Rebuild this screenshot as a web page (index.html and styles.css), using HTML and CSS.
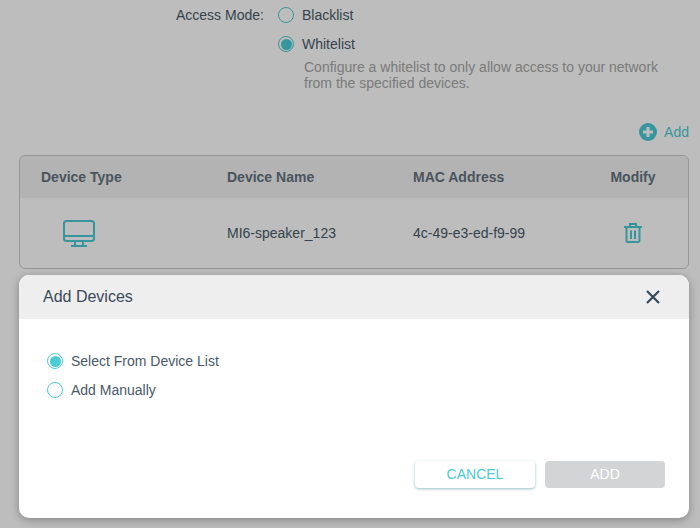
FILE: index.html
```html
<!DOCTYPE html>
<html lang="en">
<head>
<meta charset="utf-8">
<title>Access Control</title>
<link rel="stylesheet" href="styles.css">
</head>
<body>
<main class="page">
  <section class="mode">
    <div class="mode-label">Access Mode:</div>
    <div class="mode-options">
      <label class="radio-row"><span class="radio"></span><span>Blacklist</span></label>
      <label class="radio-row"><span class="radio on"></span><span>Whitelist</span></label>
      <p class="hint">Configure a whitelist to only allow access to your network<br>from the specified devices.</p>
    </div>
  </section>
  <div class="toolbar">
    <svg class="add-icon" viewBox="0 0 18 18" width="18" height="18"><circle cx="9" cy="9" r="9" fill="#4acbd6"/><path d="M9 4v10M4 9h10" stroke="#fff" stroke-width="3"/></svg>
    <span>Add</span>
  </div>
  <div class="table">
    <div class="thead">
      <div>Device Type</div><div>Device Name</div><div>MAC Address</div><div class="c">Modify</div>
    </div>
    <div class="tbody">
      <div class="icon-cell">
        <svg viewBox="0 0 32 27" width="32" height="27" fill="none" stroke="#4acbd6" stroke-width="2"><rect x="1" y="1" width="30" height="20" rx="2.5"/><path d="M1 16h30M12 21v5M20 21v5M8 26h16"/></svg>
      </div>
      <div>MI6-speaker_123</div>
      <div>4c-49-e3-ed-f9-99</div>
      <div class="c">
        <svg viewBox="0 0 18 20" width="18" height="20" fill="none" stroke="#4acbd6" stroke-width="2"><path d="M0 4h18M6 4V1h6v3"/><path d="M2.5 4v13.5a1.5 1.5 0 0 0 1.5 1.5h10a1.5 1.5 0 0 0 1.5-1.5V4M7 7.5V16M11 7.5V16"/></svg>
      </div>
    </div>
  </div>
</main>
<div class="scrim"></div>
<div class="modal">
  <header class="modal-head">
    <h2>Add Devices</h2>
    <svg viewBox="0 0 14 14" width="14" height="14" stroke="#34495a" stroke-width="2.2" fill="none"><path d="M1 1l12 12M13 1L1 13"/></svg>
  </header>
  <div class="modal-body">
    <label class="radio-row"><span class="radio on"></span><span>Select From Device List</span></label>
    <label class="radio-row"><span class="radio"></span><span>Add Manually</span></label>
  </div>
  <footer class="modal-foot">
    <button class="btn cancel">CANCEL</button>
    <button class="btn add">ADD</button>
  </footer>
</div>
</body>
</html>
```
FILE: styles.css
```css
* { box-sizing: border-box; }
html, body { margin: 0; height: 100%; }
body { width: 700px; height: 528px; overflow: hidden; position: relative; background: #fff; font-family: "Liberation Sans", Arial, sans-serif; font-size: 14px; color: #4a5a68; }
.page { padding: 0 11px 0 19px; }
.mode { display: flex; padding-left: 157px; padding-top: 7px; }
.mode-label { width: 102px; line-height: 16px; color: #4a5a68; }
.mode-options { display: flex; flex-direction: column; }
.radio-row { display: flex; align-items: center; gap: 8px; height: 16px; line-height: 16px; margin-bottom: 13px; }
.radio { width: 16px; height: 16px; border-radius: 50%; border: 1.5px solid #4acbd6; background: #fff; flex: none; position: relative; }
.radio.on::after { content: ""; position: absolute; inset: 1.5px; border-radius: 50%; background: #4acbd6; }
.hint { margin: -6px 0 0 26px; line-height: 16px; color: #a6a6a6; }
.toolbar { display: flex; justify-content: flex-end; align-items: center; gap: 7px; margin-top: 32px; height: 18px; color: #4acbd6; }
.table { margin-top: 14px; border: 1px solid #c8c8c8; border-radius: 6px; overflow: hidden; height: 114px; }
.thead, .tbody { display: grid; grid-template-columns: 186px 186px 186px 1fr; align-items: center; padding-left: 21px; }
.thead { height: 42px; background: #f2f2f2; font-weight: bold; color: #66727e; }
.tbody { height: 70px; color: #4a5a68; }
.c { text-align: center; padding-right: 21px; }
.icon-cell { padding-left: 22px; display: flex; }
.c svg, .icon-cell svg { display: block; }
.c svg { margin: 0 auto; }
.scrim { position: absolute; inset: 0; background: rgba(0,0,0,.26); }
.modal { position: absolute; left: 19px; top: 275px; width: 670px; height: 243px; background: #fff; border-radius: 10px; overflow: hidden; display: flex; flex-direction: column; box-shadow: 0 2px 8px rgba(0,0,0,.3); }
.modal-head { height: 44px; background: #eee; display: flex; align-items: center; justify-content: space-between; padding: 0 29px 0 24px; }
.modal-head h2 { margin: 0; font-size: 16px; font-weight: normal; color: #3a4a58; }
.modal-body { padding: 34px 28px 0; flex: 1; }
.modal-foot { display: flex; justify-content: flex-end; gap: 10px; padding: 0 24px 30px; }
.btn { width: 120px; height: 27px; border: 0; border-radius: 4px; font: 14px "Liberation Sans", Arial, sans-serif; padding: 0 0 2px; }
.cancel { background: #fff; color: #4acbd6; box-shadow: 0 1px 3px rgba(60,140,150,.55); }
.add { background: #d3d4d5; color: #fff; }
```
